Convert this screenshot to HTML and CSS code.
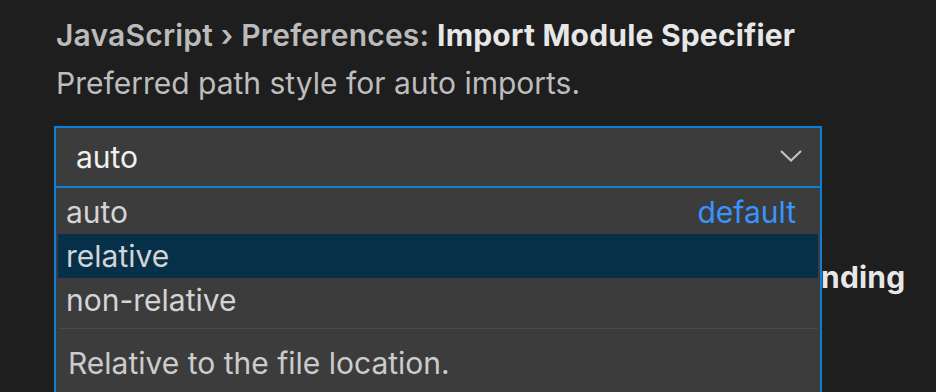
FILE: index.html
```html
<!DOCTYPE html>
<html lang="en">
<head>
  <meta charset="UTF-8" />
  <title>Settings</title>
  <link rel="stylesheet" href="styles.css">
</head>
<body>

  <!-- Import Module Specifier -->
  <div class="setting">
    <div class="setting-title">
      <span class="category">JavaScript › Preferences: </span><span class="label">Import Module Specifier</span>
    </div>
    <div class="setting-desc">Preferred path style for auto imports.</div>

    <div class="select-wrap">
      <div class="select">
        <span>auto</span>
        <svg class="chevron" width="22" height="12" viewBox="0 0 22 12">
          <path d="M1 1 L11 10.5 L21 1" fill="none" stroke="#c5c5c5" stroke-width="2"/>
        </svg>
      </div>

      <!-- Открытый список -->
      <div class="dropdown">
        <div class="option">
          <span>auto</span>
          <span class="default">default</span>
        </div>
        <div class="option selected"><span>relative</span></div>
        <div class="option"><span>non-relative</span></div>
        <div class="option-desc">Relative to the file location.</div>
      </div>
    </div>
  </div>

  <!-- Import Module Specifier Ending -->
  <div class="setting last">
    <div class="setting-title">
      <span class="category">JavaScript › Preferences: </span><span class="label">Import Module Specifier Ending</span>
    </div>
  </div>

</body>
</html>
```

FILE: styles.css
```css
:root {
  --bg: #1e1e1e;
  --input-bg: #3c3c3c;
  --focus: #0e7fd4;
  --text: #cccccc;
  --selected: #062f4a;
}

* {
  box-sizing: border-box;
}

html {
  height: 100%;
}

body {
  margin: 0;
  min-height: 100%;
  background: var(--bg);
  color: var(--text);
  font-family: Inter, "Noto Sans", sans-serif;
  font-size: 30px;
}

.setting {
  padding: 17px 0 54px 56px;
}

.setting.last {
  padding-bottom: 0;
}

.setting-title {
  line-height: 36px;
  font-weight: 600;
  letter-spacing: 0.2px;
  white-space: nowrap;
}

.category {
  color: #bbbbbb;
}

.label {
  color: #e7e7e7;
  font-weight: 700;
}

.setting-desc {
  margin-top: 12px;
  line-height: 36px;
  color: #bdbdbd;
}

.select-wrap {
  position: relative;
  width: 768px;
  margin-top: 25px;
  margin-left: -2px;
}

.select {
  display: flex;
  justify-content: space-between;
  align-items: center;
  height: 62px;
  padding: 0 18px 0 20px;
  background: var(--input-bg);
  border: 2px solid var(--focus);
  color: #f0f0f0;
}

.chevron {
  margin-top: -2px;
}

/* раскрытый список поверх следующей настройки */
.dropdown {
  position: absolute;
  left: 0;
  right: 0;
  top: 60px;
  height: 206px;
  padding: 2px 2px 0;
  background: var(--input-bg);
  border: 2px solid var(--focus);
  border-bottom: none;
  z-index: 2;
}

.option {
  display: flex;
  justify-content: space-between;
  height: 44px;
  line-height: 44px;
  padding: 0 22px 0 8px;
  color: #d4d4d4;
}

.option.selected {
  background: var(--selected);
}

.default {
  color: #3794ff;
}

.option-desc {
  margin-top: 6px;
  padding: 16px 10px 0;
  border-top: 1px solid #4a4a4a;
  line-height: 36px;
  color: #cccccc;
}
```
